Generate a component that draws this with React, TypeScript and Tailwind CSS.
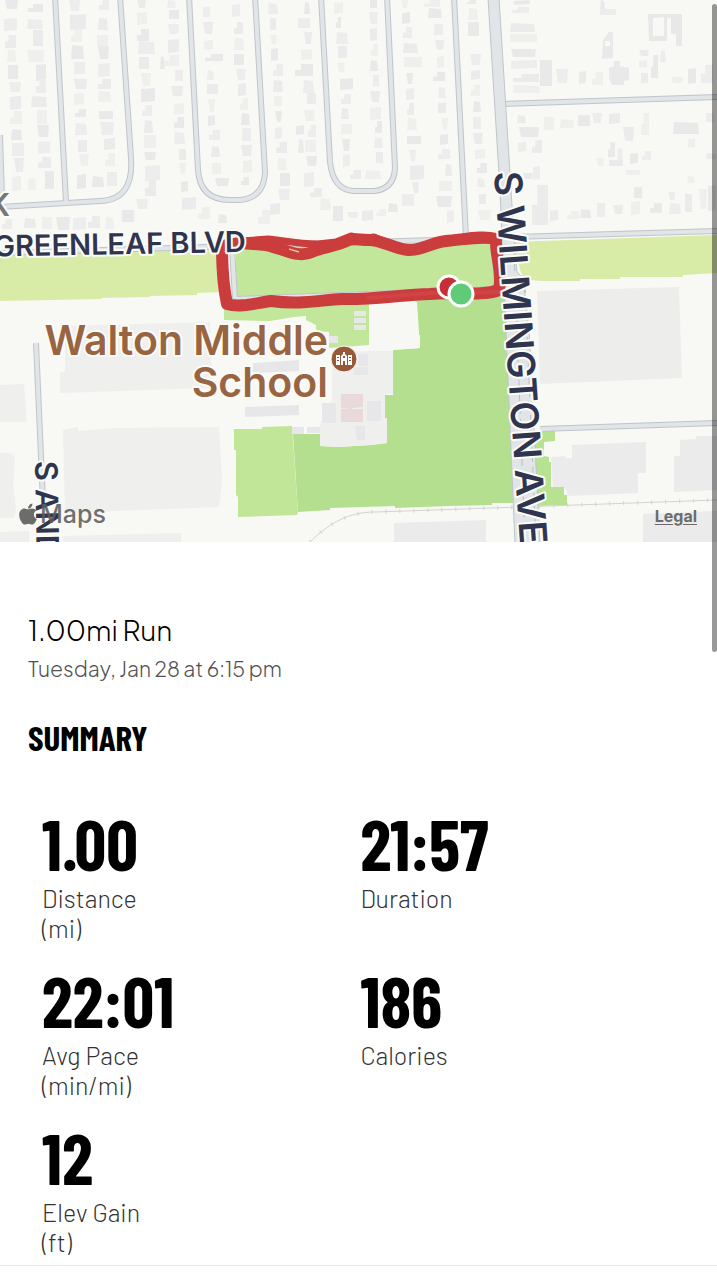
import { FaApple } from "react-icons/fa";

type Box = [number, number, number, number];

const houses: Box[] = [
  [5,0,13,9],[4,18,13,12],[5,35,11,13],[7,49,9,13],[8,65,10,14],[9,82,12,10],[10,96,11,13],[10,111,12,13],[11,129,11,11],[12,143,12,13],[14,158,10,14],[12,176,9,14],
  [28,4,15,8],[27,19,16,10],[33,30,10,16],[27,50,17,12],[36,64,10,16],[36,79,10,14],[31,96,16,11],[37,110,10,14],[37,125,12,12],[38,141,12,12],[38,157,13,11],[28,178,8,12],[45,171,9,18],
  [69,0,11,11],[70,14,16,15],[71,29,11,13],[71,45,13,14],[74,62,11,12],[74,79,13,10],[74,93,10,11],[75,109,11,8],[75,123,12,12],[78,140,9,12],[79,154,10,12],[77,174,9,14],
  [99,0,10,10],[98,18,10,12],[97,35,11,11],[98,46,11,13],[98,63,12,13],[98,79,13,10],[98,91,13,11],[99,111,14,8],[100,122,14,13],[104,138,11,11],[105,153,10,13],[92,176,12,11],[107,172,10,14],
  [137,0,9,8],[137,12,10,12],[137,29,12,12],[138,41,17,13],[139,57,10,12],[141,73,10,13],[141,88,14,13],[142,105,10,11],[144,120,9,13],[144,135,12,13],[144,152,12,8],[145,165,15,15],[145,180,11,16],
  [167,0,9,8],[169,10,10,9],[168,24,11,10],[168,39,11,13],[165,55,14,11],[160,56,5,13],[175,70,8,11],[171,86,12,10],[174,103,10,11],[174,117,10,11],[174,132,11,12],[179,149,7,11],[179,163,7,11],[181,181,7,10],
  [2,219,10,10],[24,218,12,10],[42,217,10,12],[56,217,14,13],[73,217,13,12],[88,216,12,12],[105,217,9,12],[122,210,12,12],[136,199,12,10],[182,197,14,12],[198,207,12,12],[218,214,9,9],
  [203,7,7,10],[203,22,10,12],[204,40,9,9],[205,54,18,7],[207,70,7,10],[207,84,11,10],[208,99,7,13],[208,115,7,10],[209,130,11,10],[211,146,9,11],[212,163,9,11],[215,178,14,8],
  [232,4,8,12],[234,22,9,12],[234,38,10,12],[234,54,10,11],[236,69,10,11],[238,83,8,12],[240,98,8,12],[241,113,9,12],[242,128,9,13],[241,145,11,11],[243,160,9,12],[241,177,8,8],
  [268,3,10,11],[270,18,6,12],[270,35,7,9],[271,48,7,12],[273,64,10,12],[273,80,10,12],[274,96,8,10],[275,111,7,11],[275,127,7,11],[276,142,11,11],[277,158,10,12],[280,173,10,13],[278,189,12,11],[270,203,10,11],[258,210,12,14],
  [304,2,6,12],[298,18,12,10],[304,32,8,12],[301,49,11,10],[295,64,18,12],[303,80,11,13],[307,93,9,11],[304,110,11,11],[296,125,8,9],[308,125,8,12],[298,139,6,14],[305,140,11,12],[306,156,11,10],[304,172,10,14],[310,188,12,9],[320,198,11,12],[333,206,10,15],[347,212,11,6],[362,210,11,10],[376,209,10,7],[388,203,10,9],[402,194,12,12],[412,182,7,11],
  [334,2,9,11],[336,17,5,11],[336,32,12,12],[338,46,9,12],[337,63,8,9],[340,78,13,11],[341,94,10,10],[341,108,8,11],[341,124,11,10],[342,139,8,12],[343,154,7,12],[350,170,11,9],[365,170,16,9],
  [370,0,7,8],[369,12,9,12],[370,28,7,12],[371,44,7,12],[370,60,8,11],[373,75,6,11],[370,91,10,11],[370,107,11,12],[375,121,7,12],[374,137,9,11],[376,152,7,11],
  [401,0,7,8],[402,12,8,11],[403,27,9,11],[403,43,15,10],[404,57,18,10],[406,73,7,11],[406,88,8,11],[407,103,7,12],[407,118,10,12],[407,136,14,8],[409,150,7,11],[410,165,14,14],
  [424,0,16,7],[428,8,14,10],[434,24,9,11],[435,40,9,10],[437,56,7,11],[433,72,12,9],[438,87,8,11],[438,103,8,10],[441,118,7,12],[440,134,8,10],[438,149,12,10],[445,164,7,12],[439,181,13,10],[436,196,16,11],[447,210,7,12],
  [467,0,9,4],[468,8,10,12],[468,22,11,14],[470,54,11,11],[471,70,9,9],[471,85,9,11],[473,101,8,11],[473,117,8,12],[473,133,10,11],[475,149,10,9],[477,163,10,10],[477,178,8,9],[479,194,7,10],[478,210,13,10],
  [514,0,16,4],[512,7,17,6],[510,23,25,9],[510,34,27,8],[511,49,25,8],[511,60,26,8],[513,74,26,8],[513,85,27,8],[540,60,12,26],[556,69,12,14],[579,71,7,12],[592,72,11,13],[600,0,5,9],[600,9,16,6],
  [639,50,10,6],[639,60,8,7],[651,55,7,23],[660,50,6,12],[641,73,7,10],[671,77,12,6],[688,68,8,15],[701,65,12,18],
  [517,115,9,8],[544,117,10,13],[519,127,20,10],[518,142,8,9],[532,140,10,13],[560,119,14,9],[578,115,12,11],[592,113,10,10],[609,113,11,10],[641,113,8,22],[673,122,26,12],[706,113,8,9],[623,127,11,14],[688,138,7,9],[608,142,7,15],[617,148,6,12],[609,160,14,6],[596,158,8,8],[630,153,8,10],[642,151,9,9],[706,153,10,6],[626,170,14,5],[523,173,10,6],[533,166,7,13],[532,185,16,40],[687,176,8,7],[634,187,8,11],[668,192,7,8],[550,210,8,10],[567,211,12,8],[580,209,11,9],[597,203,8,14],[613,205,10,9],[631,201,9,13],[650,203,12,10],[669,203,12,11],[685,194,7,18],[699,189,8,20],[708,185,8,25],
];

const houseFills = ["#e9e9ea", "#ededed", "#ebebec", "#efefee"];

function housePath([x, y, w, h]: Box, i: number) {
  switch (i % 5) {
    case 0:
      return `M${x} ${y}h${w}l-1 ${h}h${3 - w}z`;
    case 1:
      return `M${x} ${y + 1}l${w} -1v${h}l${-w} 1z`;
    case 2:
      return `M${x + w / 3} ${y}h${(w * 2) / 3}v${h}h${-w}v${-h / 2}h${w / 3}z`;
    case 3:
      return `M${x + 1} ${y}l${w - 2} 1l1 ${h - 1}h${-w}z`;
    default:
      return `M${x} ${y}h${w}v${h}h${-w}z`;
  }
}

const streets = [
  "M55 -4L66 202",
  "M120 -4L131 158Q134 200 100 201L-2 207",
  "M0 135L2 200",
  "M189 -4L198 170Q200 200 230 200H240Q264 198 265 172L255 -4",
  "M321 -4L330 162Q333 190 354 191H374Q394 189 395 168L387 -4",
  "M454 -4L466 238",
  "M503 104L720 97",
  "M36 343L43 502",
  "M540 429L720 423",
  "M-4 253L240 246L500 238",
  "M512 237L720 231",
  "M232 246L235 299L500 289",
];

const route =
  "M222 246C222 262 223 285 227 304C240 308 256 303 271 301C300 305 320 300 342 299C370 300 400 295 430 294C455 291 480 297 499 290C503 272 495 255 496 239C482 235 462 240 446 241C430 243 420 251 408 250C394 249 380 239 368 240C360 240 354 238 349 240C335 247 322 247 312 252C298 259 282 248 266 245L240 243Z";

function MapLabel({ x, y, angle = 0, size, anchor = "start", fill, children }: {
  x: number; y: number; angle?: number; size: number; anchor?: "start" | "end"; fill: string; children: string;
}) {
  return (
    <text
      transform={`rotate(${angle} ${x} ${y})`}
      x={x}
      y={y}
      fontSize={size}
      textAnchor={anchor}
      fill={fill}
      stroke="#fbfbf8"
      strokeWidth={4}
      strokeLinejoin="round"
      paintOrder="stroke"
      className="font-['Inter',sans-serif] font-semibold"
    >
      {children}
    </text>
  );
}

function RouteMap() {
  return (
    <svg viewBox="0 0 717 542" preserveAspectRatio="xMidYMid slice" className="block h-[542px] w-full" role="img" aria-label="Map of the run">
      <rect width="717" height="542" fill="#f8f8f5" />
      {houses.map((box, i) => (
        <path key={i} d={housePath(box, i)} fill={houseFills[i % 4]} />
      ))}
      <path fill="#e8e8e9" d="M648 14h34v32h-6v-12h-5v-16h-4v23h-18zM653 18v18h11v-19z" fillRule="evenodd" />
      <path fill="#e9e9ea" d="M609 68l5 -2v-5h6v5l9 2v12l-5 1v4h-12l-3 -7zM603 40l6 -8h4v26l-11 1z" />
      <rect x="605" y="41" width="5" height="5" fill="#f8f8f5" />

      <path fill="#ececeb" d="M60 326L210 322L212 388L60 393V372H65V340H60zM63 430L78 427V431L114 428L219 427L222 480L219 507L65 513zM0 385L24 384L27 422H0zM0 453H11L15 458L13 485L16 510L14 518H0zM63 536L181 533V542H63zM0 532L29 531V542H0z" opacity=".75" />
      <path fill="#ededec" d="M537 291L679 287L682 378L540 384z" />
      <path fill="#ebebec" d="M551 457L565 456V458H572V445L646 442V473H638V493L568 496L565 488H553zM680 440L696 439V436H717V490L674 492V456H680zM394 523L486 520V542H394zM643 514L717 511V542H643z" />

      <path fill="#d9eca7" d="M0 254L224 248V292L197 293V295L150 296V297L101 298V299L53 300L0 301zM512 242L717 235V273L683 275V277L620 277V279L580 279V281L540 281L523 279z" />
      <path fill="#c2e79a" d="M236 249L497 240V289L236 297zM224 304L369 298V345L329 348V332L316 331V325L306 320V316L294 317L270 321L224 320z" />
      <path fill="#b4df8f" d="M369 303L505 291L514 503L492 503V505L449 506L395 508V506L330 508V510L298 512L293 434H320V446L338 447L371 445L387 443V419L385 418V395H393V350L420 348L417 302z" />
      <path fill="#c2e698" d="M234 429H262V427L292 426L298 512L297 515L267 516L238 517V497L236 495V450H234z" />
      <path fill="#f7f7f4" d="M369 303L416 301V312L418 314V335H420V348L393 350L375 350L369 352z" />
      <path fill="#efefed" d="M369 351H393V394H385V418H387V443L371 445L338 447L320 446V424L332 400V352z" />
      <path fill="#e7e7e9" d="M354 311H366V316H354zM354 318H366V323H354zM354 325H366V330H354zM329 336h9v7h-9zM322 403h14v20h-14zM355 426h10v14h-8zM367 401h14v20h-14zM292 427h12v7h-12zM307 427h13v6h-13zM245 407L299 405V415L245 417zM253 363L299 360V371L253 373zM358 354h10v12h-10zM354 367h14v8h-14z" />
      <path fill="#e9d9db" d="M341 394H363V407L352 408H341zM341 409L352 408V409H363V422H341z" />
      <path fill="#b8e191" d="M531 431L555 431V441L544 442V456L549 457V462H551V487H564V495H567V505L535 506z" />

      <path fill="none" stroke="#d3d3d0" strokeWidth="1" d="M310 542C330 522 350 512 375 512L520 507L717 500" />
      <path fill="none" stroke="#d3d3d0" strokeWidth="4" strokeDasharray="1 13" d="M310 542C330 522 350 512 375 512L520 507L717 500" />

      <g fill="none" stroke="#bfc5c9" strokeWidth="6">
        {streets.map((d) => <path key={d} d={d} />)}
      </g>
      <g fill="none" stroke="#e1e5e8" strokeWidth="4">
        {streets.map((d) => <path key={d} d={d} />)}
      </g>
      <path fill="#e1e5e8" stroke="#bfc5c9" d="M488 -2H499L514 238L517 272L523 278L529 330L540 544H515L500 190z" />
      <path fill="none" stroke="#b9bec3" strokeDasharray="8 5" d="M514 250L525 542M525 285L536 542" />

      <g fill="none" stroke="#cb3c3c" strokeLinejoin="round" strokeLinecap="round">
        <path strokeWidth="12" d={route} />
        <path strokeWidth="7" d="M242 241L268 239C282 240 296 244 318 244L336 242L351 236L362 239L374 237L386 242" />
        <path strokeWidth="4" stroke="#d24346" d="M368 298L430 293L500 292" />
      </g>
      <path stroke="#d9c58e" strokeWidth="1.5" d="M289 249L299 252" />
      <g stroke="#fff" strokeWidth="3">
        <circle cx="449" cy="287" r="11" fill="#c62f36" />
        <circle cx="461" cy="294" r="12" fill="#5fcb78" />
      </g>

      <MapLabel x={246} y={252} angle={-1} size={29} anchor="end" fill="#30354f">GREENLEAF BLVD</MapLabel>
      <MapLabel x={494} y={172} angle={86} size={38} fill="#30354f">S WILMINGTON AVE</MapLabel>
      <MapLabel x={35} y={461} angle={89} size={31} fill="#30354f">S AND</MapLabel>
      <MapLabel x={10} y={216} size={31} anchor="end" fill="#77777a">K</MapLabel>
      <MapLabel x={328} y={355} size={41} anchor="end" fill="#986442">Walton Middle</MapLabel>
      <MapLabel x={328} y={397} size={41} anchor="end" fill="#986442">School</MapLabel>

      <circle cx="344" cy="359" r="13" fill="#965a38" stroke="#faf8f4" strokeWidth="1" />
      <path fill="#fff" fillRule="evenodd" d="M336 355h4v10h-4zM348 355h4v10h-4zM341 365v-9l2 -2v-2h2v2l2 2v9h-2v-4h-2v4zM337 357v1h2v-1zM337 360v1h2v-1zM349 357v1h2v-1zM349 360v1h2v-1zM343 356v2h2v-2z" />
    </svg>
  );
}

const stats = [
  { value: "1.00", label: "Distance", unit: "(mi)" },
  { value: "21:57", label: "Duration" },
  { value: "22:01", label: "Avg Pace", unit: "(min/mi)" },
  { value: "186", label: "Calories" },
  { value: "12", label: "Elev Gain", unit: "(ft)" },
];

export default function App() {
  return (
    <main className="relative min-h-screen bg-white text-black">
      <div className="absolute top-1 right-0 z-10 h-[648px] w-[5px] rounded-full bg-black/40" />
      <section className="relative overflow-hidden">
        <RouteMap />
        <div className="absolute bottom-3 left-4 flex items-center text-[#5c5c5c]/90">
          <FaApple className="size-6" aria-hidden="true" />
          <span className="font-['Inter',sans-serif] text-[25px] leading-8 font-medium">Maps</span>
        </div>
        <a href="#legal" className="absolute right-5 bottom-4 font-['Inter',sans-serif] text-base leading-5 font-bold text-[#6c6c6c] underline underline-offset-2">
          Legal
        </a>
      </section>

      <section className="border-b border-[#e9e9e9] px-7 pt-[70px] pb-2">
        <h1 className="font-['Plus_Jakarta_Sans','Lato',sans-serif] text-[28px] leading-9 font-light">1.00mi Run</h1>
        <p className="mt-[5px] font-['Plus_Jakarta_Sans','Lato',sans-serif] text-[21px] leading-8 font-light text-[#505050]">Tuesday, Jan 28 at 6:15 pm</p>
        <h2 className="mt-[30px] font-['Barlow_Condensed','Roboto',sans-serif] text-[35px] leading-[44px] font-bold">SUMMARY</h2>
        <dl className="mt-[53px] grid grid-cols-2 gap-x-1 gap-y-[26px] px-3.5">
          {stats.map((s) => (
            <div key={s.label} className="flex flex-col">
              <dt className="order-last font-['Barlow','Roboto',sans-serif] text-[25px] leading-[30px] font-light text-[#333]">
                {s.label}
                {s.unit && <span className="block">{s.unit}</span>}
              </dt>
              <dd className="mb-[9px] font-['Barlow_Condensed','Roboto',sans-serif] text-[70px] leading-[62px] font-bold">{s.value}</dd>
            </div>
          ))}
        </dl>
      </section>
    </main>
  );
}
